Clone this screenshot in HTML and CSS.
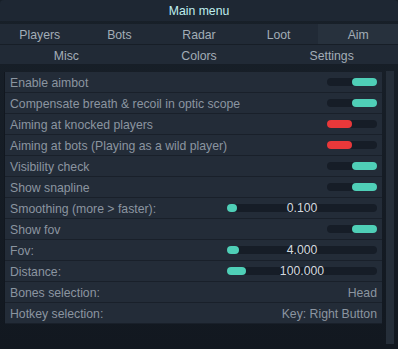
FILE: index.html
```html
<!DOCTYPE html>
<html lang="en">

<head>
    <meta charset="UTF-8">
    <meta name="viewport" content="width=device-width, initial-scale=1.0">
    <title>Main menu</title>
    <link rel="stylesheet" href="styles.css">
</head>

<body>
    <div class="window">
        <div class="titlebar">Main menu</div>
        <ul class="tabs tabs5">
            <li>Players</li>
            <li>Bots</li>
            <li>Radar</li>
            <li>Loot</li>
            <li class="active">Aim</li>
        </ul>
        <ul class="tabs tabs3">
            <li>Misc</li>
            <li>Colors</li>
            <li>Settings</li>
        </ul>
        <div class="content">
            <div class="list">
                <div class="row">
                    <span>Enable aimbot</span>
                    <span class="toggle on"><i></i></span>
                </div>
                <div class="row">
                    <span>Compensate breath &amp; recoil in optic scope</span>
                    <span class="toggle on"><i></i></span>
                </div>
                <div class="row">
                    <span>Aiming at knocked players</span>
                    <span class="toggle off"><i></i></span>
                </div>
                <div class="row">
                    <span>Aiming at bots (Playing as a wild player)</span>
                    <span class="toggle off"><i></i></span>
                </div>
                <div class="row">
                    <span>Visibility check</span>
                    <span class="toggle on"><i></i></span>
                </div>
                <div class="row">
                    <span>Show snapline</span>
                    <span class="toggle on"><i></i></span>
                </div>
                <div class="row">
                    <span>Smoothing (more &gt; faster):</span>
                    <span class="slider"><i style="width: 10px"></i><b>0.100</b></span>
                </div>
                <div class="row">
                    <span>Show fov</span>
                    <span class="toggle on"><i></i></span>
                </div>
                <div class="row">
                    <span>Fov:</span>
                    <span class="slider"><i style="width: 12px"></i><b>4.000</b></span>
                </div>
                <div class="row">
                    <span>Distance:</span>
                    <span class="slider"><i style="width: 19px"></i><b>100.000</b></span>
                </div>
                <div class="row">
                    <span>Bones selection:</span>
                    <span>Head</span>
                </div>
                <div class="row">
                    <span>Hotkey selection:</span>
                    <span>Key: Right Button</span>
                </div>
            </div>
            <div class="scrollbar"></div>
        </div>
    </div>
</body>

</html>
```

FILE: styles.css
```css
* {
    margin: 0;
    padding: 0;
    box-sizing: border-box;
}

ul,
li {
    list-style: none;
}

body {
    background-color: #151c24;
    font-family: "Liberation Sans", Arial, sans-serif;
    font-size: 12.25px;
}

.window {
    width: 398px;
    height: 349px;
    display: flex;
    flex-direction: column;
    background: linear-gradient(#182029, #121820);
}

.titlebar {
    height: 21px;
    padding-top: 2px;
    line-height: 19px;
    text-align: center;
    color: #bfeeee;
    background-color: #1e2733;
    border-radius: 4px 4px 0 0;
    margin-bottom: 3px;
}

.tabs {
    display: grid;
    height: 21px;
    background-color: #212a36;
    border-bottom: 1px solid #171e27;
}

.tabs5 {
    grid-template-columns: repeat(5, 1fr);
}

.tabs3 {
    grid-template-columns: repeat(3, 1fr);
    height: 20px;
}

.tabs>li {
    display: flex;
    justify-content: center;
    align-items: center;
    padding-top: 2px;
    color: #a3adb7;
}

.tabs>li.active {
    background-color: #27313d;
}

.content {
    flex: 1;
    display: flex;
    padding: 7px 4px 5px 4px;
    gap: 4px;
}

.list {
    flex: 1;
    align-self: flex-start;
    border-left: 1px solid #11171f;
}

.row {
    height: 21px;
    padding: 1px 5px 0 5px;
    display: flex;
    justify-content: space-between;
    align-items: center;
    color: #8b95a0;
    background-color: #232c38;
    border-bottom: 1px solid #19202a;
}

.toggle {
    width: 50px;
    height: 8px;
    margin-top: -1px;
    border-radius: 4px;
    background-color: #161d27;
    display: flex;
}

.toggle>i {
    width: 25px;
    height: 8px;
    border-radius: 4px;
}

.toggle.on {
    justify-content: flex-end;
}

.toggle.on>i {
    background-color: #4fcfb7;
}

.toggle.off>i {
    background-color: #e8383a;
}

.slider {
    position: relative;
    width: 150px;
    height: 8px;
    margin-top: -1px;
    border-radius: 4px;
    background-color: #161d27;
}

.slider>i {
    display: block;
    height: 8px;
    border-radius: 4px;
    background-color: #4fcfb7;
}

.slider>b {
    position: absolute;
    left: 0;
    right: 0;
    top: -3px;
    line-height: 14px;
    text-align: center;
    font-weight: normal;
    color: #d3d9df;
}

.scrollbar {
    width: 8px;
    margin-top: -1px;
    background-color: #252e39;
}
```
